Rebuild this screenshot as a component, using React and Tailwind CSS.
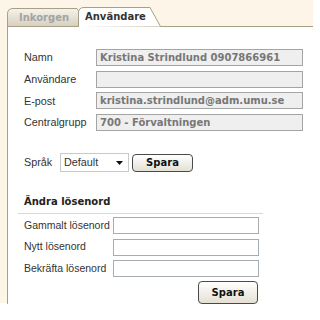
import React from 'react';

const sans = "font-['Liberation_Sans',Arial,sans-serif]";
const bold = "font-['DejaVu_Sans',Verdana,sans-serif] font-bold";

const profile = [
  { label: 'Namn', value: 'Kristina Strindlund 0907866961' },
  { label: 'Användare', value: '' },
  { label: 'E-post', value: 'kristina.strindlund@adm.umu.se' },
  { label: 'Centralgrupp', value: '700 - Förvaltningen' },
];

const passwordFields = ['Gammalt lösenord', 'Nytt lösenord', 'Bekräfta lösenord'];

const Tab = ({ label, active, width, height }) => (
  <div
    className={`relative flex items-center ${active ? 'z-10 mb-[-1px] ml-[-10px] pl-[7px] text-[#333]' : 'pl-[12px] pt-[1px] text-[#a3a3a3]'}`}
    style={{ width, height }}
  >
    <svg className="absolute inset-0" width={width} height={height} viewBox={`0 0 ${width} ${height}`}>
      <defs>
        <linearGradient id="tabOff" x1="0" y1="0" x2="0" y2="1">
          <stop offset="0" stopColor="#f6f3ec" />
          <stop offset="1" stopColor="#d8d0bf" />
        </linearGradient>
      </defs>
      <path
        d={`M0.5 ${height} V6 Q0.5 0.5 6 0.5 H${width - 11} L${width - 0.5} ${active ? height - 0.5 : height}`}
        fill={active ? '#ffffff' : 'url(#tabOff)'}
        stroke="#a89f88"
        strokeWidth="1"
      />
    </svg>
    <span className={`relative text-[10px] leading-none ${bold}`}>{label}</span>
  </div>
);

const Button = ({ className }) => (
  <button
    className={`flex items-center justify-center rounded-[4px] border border-[#4a4a4a] bg-gradient-to-b from-white to-[#e4e0d4] text-[10px] text-[#111] ${bold} ${className}`}
  >
    Spara
  </button>
);

export default function App() {
  return (
    <div className={`w-[313px] h-[320px] bg-white text-[#333] ${sans}`}>
      <div className="flex h-[303px] flex-col bg-[#fdf6e8]">
        {/* Tabs */}
        <div className="flex h-[26px] shrink-0 items-end pl-[7px]">
          <Tab label="Inkorgen" width={81} height={18} />
          <Tab label="Användare" active width={83} height={20} />
        </div>

        {/* Panel */}
        <div className="ml-[7px] flex-1 border-l border-t border-[#a89f88] bg-white pl-[16px] pt-[22px]">
          <div className="grid grid-cols-[72px_207px] gap-y-[4.7px]">
            {profile.map((row) => (
              <React.Fragment key={row.label}>
                <div className="flex h-[17px] items-center text-[10.8px]">{row.label}</div>
                <div
                  className={`flex h-[17px] items-center border border-[#a4a4a4] bg-[#efefef] px-[3px] text-[10px] text-[#777] ${bold}`}
                >
                  {row.value}
                </div>
              </React.Fragment>
            ))}
          </div>

          <div className="mt-[22px] flex items-center">
            <span className="w-[36px] text-[10.8px]">Språk</span>
            <div className="flex h-[19px] w-[69px] items-center justify-between border border-[#c9c9c9] pl-[3px] pr-[5px] text-[10.8px]">
              <span>Default</span>
              <svg width="7" height="4" viewBox="0 0 7 4">
                <path d="M0 0 H7 L3.5 4 Z" fill="#111" />
              </svg>
            </div>
            <Button className="ml-[3px] h-[18px] w-[61px]" />
          </div>

          <div className="ml-[-6px] mt-[22px] w-[245px]">
            <div className={`border-b border-[#e2d8bb] pb-[4px] pl-[6px] text-[10px] text-[#222] ${bold}`}>
              Ändra lösenord
            </div>
            <div className="mt-[3px] flex flex-col gap-y-[4.5px] pl-[6px]">
              {passwordFields.map((label) => (
                <div key={label} className="flex items-center">
                  <span className="w-[89px] whitespace-nowrap text-[10.5px]">{label}</span>
                  <div className="h-[17px] w-[146px] border border-[#a5acb2] bg-white" />
                </div>
              ))}
            </div>
            <div className="mt-[4px] flex justify-end pr-[5px]">
              <Button className="h-[23px] w-[60px]" />
            </div>
          </div>
        </div>
      </div>
    </div>
  );
}
